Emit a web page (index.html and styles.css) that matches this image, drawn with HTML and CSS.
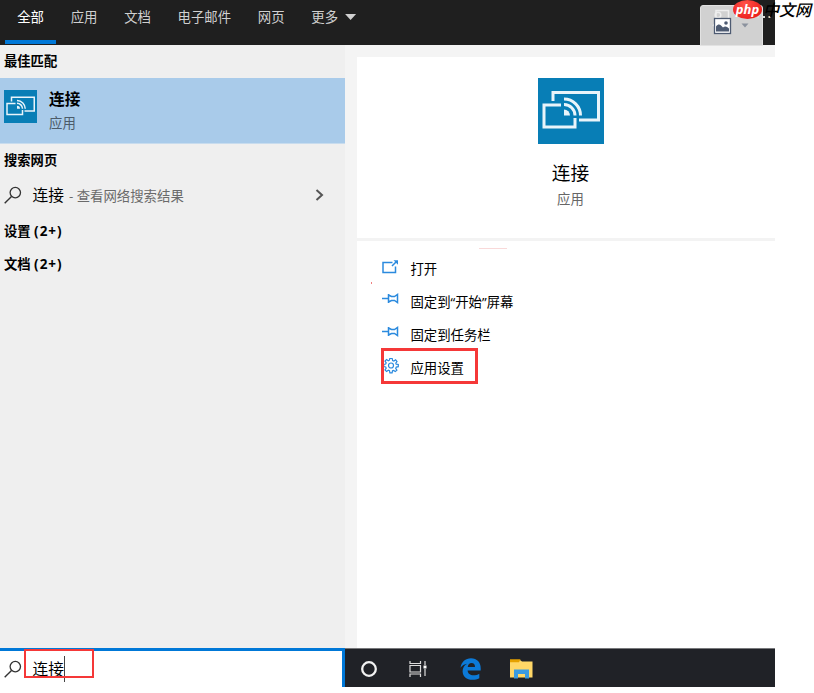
FILE: index.html
```
<!DOCTYPE html>
<html lang="zh-CN">
<head>
    <meta charset="UTF-8">
    <meta name="viewport" content="width=device-width, initial-scale=1.0">
    <title>连接 - 搜索</title>
    <link rel="stylesheet" href="styles.css">
</head>
<body>
    <svg class="symbols">
        <symbol id="icon-connect" viewBox="0 0 66 66">
            <path d="M15 23V14.5H60.500V42H41M23 27H6V49H37V40" fill="none" stroke="#e9f4fa" stroke-width="3"/>
            <path d="M26 31.5A6 6 0 0 1 32 37.500H26z" fill="#e9f4fa"/>
            <path d="M26 26.500A11 11 0 0 1 37 37.500M26 21A16.500 16.500 0 0 1 42.500 37.500" fill="none" stroke="#e9f4fa" stroke-width="3"/>
        </symbol>
        <symbol id="icon-search" viewBox="0 0 18 18">
            <circle cx="11.300" cy="6.600" r="5.200" fill="none" stroke="#333" stroke-width="1.300"/>
            <path d="M7.500 10.500L.7 17.300" stroke="#333" stroke-width="1.400"/>
        </symbol>
        <symbol id="icon-pin" viewBox="0 0 17 12">
            <path d="M0 5.500H6.500M6.500 1V10M6.500 2L9.500 3.500H12.500L15.500 1.500V9.500L12.500 7.500H9.500L6.500 9" fill="none" stroke="#2b8ade" stroke-width="1.500"/>
        </symbol>
    </svg>

    <div class="screen">
        <div class="tabs">
            <div class="tab active">全部</div>
            <div class="tab">应用</div>
            <div class="tab">文档</div>
            <div class="tab">电子邮件</div>
            <div class="tab">网页</div>
            <div class="tab">更多<span class="arrow"></span></div>
        </div>

        <div class="main">
            <div class="results">
                <h2>最佳匹配</h2>
                <div class="best">
                    <svg class="app-icon"><use href="#icon-connect"/></svg>
                    <div>
                        <p class="best-name">连接</p>
                        <p class="best-type">应用</p>
                    </div>
                </div>
                <h2>搜索网页</h2>
                <div class="web-row">
                    <svg class="search-icon"><use href="#icon-search"/></svg>
                    <span class="term">连接</span>
                    <span class="hint">- 查看网络搜索结果</span>
                    <svg class="chevron" viewBox="0 0 9 12"><path d="M1.500 1L7 6L1.500 11" fill="none" stroke="#555" stroke-width="2"/></svg>
                </div>
                <h2>设置 <span class="count">(2+)</span></h2>
                <h2>文档 <span class="count">(2+)</span></h2>
            </div>

            <div class="detail">
                <div class="hero">
                    <svg class="hero-icon"><use href="#icon-connect"/></svg>
                    <p class="hero-name">连接</p>
                    <p class="hero-type">应用</p>
                </div>
                <div class="actions">
                    <div class="action">
                        <svg viewBox="0 0 17 14"><path d="M10.500 2.500H1V12.500H13.500V6.500M10 6L14.500 1.500" fill="none" stroke="#2b8ade" stroke-width="1.500"/><path d="M11.500 .3H16V4.800z" fill="#2b8ade"/></svg>
                        <span>打开</span>
                    </div>
                    <div class="action">
                        <svg class="pin"><use href="#icon-pin"/></svg>
                        <span>固定到“开始”屏幕</span>
                    </div>
                    <div class="action">
                        <svg class="pin"><use href="#icon-pin"/></svg>
                        <span>固定到任务栏</span>
                    </div>
                    <div class="action">
                        <svg class="gear" viewBox="0 0 16 16"><path d="M6.800 1H9.200L9.600 3L10.900 3.500L12.600 2.300L14 4L12.800 5.600L13.200 6.700L15.300 7V9.200L13.300 9.600L12.700 10.900L13.900 12.600L12.300 14.100L10.600 12.900L9.500 13.300L9.100 15.300H6.900L6.500 13.300L5.300 12.800L3.600 14L2 12.400L3.200 10.700L2.700 9.500L.7 9.100V6.900L2.700 6.500L3.200 5.300L2 3.600L3.600 2L5.300 3.200L6.400 2.700z" fill="none" stroke="#2b8ade" stroke-width="1.200"/><circle cx="8" cy="8" r="2.500" fill="none" stroke="#2b8ade" stroke-width="1.200"/></svg>
                        <span>应用设置</span>
                    </div>
                </div>
            </div>
        </div>

        <div class="bottom">
            <div class="search-box">
                <svg class="search-icon"><use href="#icon-search"/></svg>
                <span class="query">连接</span>
            </div>
            <div class="taskbar">
                <svg class="cortana" viewBox="0 0 18 18"><circle cx="9" cy="9" r="6.800" fill="none" stroke="#f2f2f2" stroke-width="2.300"/></svg>
                <svg class="task-view" viewBox="0 0 18 18">
                    <path d="M1 1V3.500H11.500V1M1 17V14H11.500V17M1 5.500H11.500V12H1zM16 1V5M16 9V16" fill="none" stroke="#ddd" stroke-width="1.200"/>
                    <path d="M14.500 5.500H17.500V8.500H14.500z" fill="#fff"/>
                </svg>
                <svg class="edge" viewBox="0 0 21 22">
                    <path d="M.5 9.800C1.300 4 5.500.3 11 .3C17 .3 20.700 4.500 20.700 10.200V12.600H7.600C7.800 15.800 10.300 17.300 13.300 17.300C15.700 17.300 17.700 16.700 19.300 15.700V20.200C17.300 21.300 15 21.800 12.500 21.800C6.500 21.800 2.600 18.300 2.600 13.200C2.600 9.900 4.300 7.200 7.200 5.700C4.300 6 2.100 7.400.5 9.800zM7.700 8.900H15C15 6.400 13.800 4.900 11.500 4.900C9.500 4.900 8.100 6.400 7.700 8.900z" fill="#0c7ad8"/>
                </svg>
                <svg class="folder" viewBox="0 0 23 20">
                    <path d="M0 1H10L12 2.500H22.500V18.500H0z" fill="#ffd767"/>
                    <path d="M0 .3H10.500L9 3.300H0z" fill="#e5a100"/>
                    <path d="M4 19.500V10.500H19V19.500H15V15H8V19.500z" fill="#3a9be0"/>
                </svg>
            </div>
        </div>
    </div>

    <!-- floating image button -->
    <div class="picture-button">
        <svg viewBox="0 0 61 39">
            <path d="M15 11V4.500H27.500V12M12 20L14 17.500" fill="none" stroke="#eee" stroke-width="1.500"/>
            <circle cx="17" cy="9" r="2.800" fill="none" stroke="#eee" stroke-width="1.500"/>
            <rect x="13.500" y="12.500" width="16" height="15" fill="#fff" stroke="#4e5b72" stroke-width="1.300"/>
            <path d="M15 25.500V20.500C18 16.500 20 19.500 22 21.500C24 19.500 26 20.500 28 22.500V25.500z" fill="#4e5b72"/>
            <circle cx="25" cy="17" r="1.800" fill="#4e5b72"/>
            <path d="M40.500 17.500H47.500L44 21.500z" fill="#8b929e"/>
        </svg>
    </div>
    <svg class="dots" viewBox="0 0 16 4"><path d="M1 1H3V3H1zM7 1H9V3H7zM12.500 1H14.500V3H12.500z" fill="#ddd"/></svg>
    <div class="brand"><span class="brand-php">php</span><span class="brand-cn">中文网</span></div>

    <div class="box box-action"></div>
    <div class="box box-query"></div>
    <div class="trace trace-line"></div>
    <div class="trace trace-dot"></div>
</body>
</html>
```
FILE: styles.css
```
/* Reset margin and padding */
* {
    margin: 0;
    padding: 0;
    box-sizing: border-box;
}

body {
    font-family: "Open Sans", "Noto Sans CJK SC", sans-serif;
    font-size: 13.4px;
    line-height: 20px;
    background: #fff;
    color: #000;
    overflow: hidden;
}

svg {
    display: block;
    flex: none;
}

.symbols {
    position: absolute;
    width: 0;
    height: 0;
}

.screen {
    width: 775px;
    height: 687px;
    display: flex;
    flex-direction: column;
}

/* Top filter tabs */
.tabs {
    height: 45px;
    background: #1f1f1f;
    display: flex;
    padding-left: 5px;
    gap: 2px;
    color: #d0d0d0;
}

.tab {
    height: 44px;
    padding: 7px 12.5px 0 12.2px;
    display: flex;
    border-bottom: 4px solid transparent;
}

.tab.active {
    color: #fff;
    border-color: #0078d7;
}

.arrow {
    margin: 7px 0 0 7px;
    width: 11px;
    height: 6px;
    background: #d0d0d0;
    clip-path: polygon(0 0, 100% 0, 50% 100%);
}

.main {
    height: 603px;
    display: flex;
    background: #f4f4f4;
}

/* Left result list */
.results {
    width: 345px;
    background: #efefef;
}

.results h2 {
    height: 33px;
    padding-left: 4px;
    font-size: 13.3px;
    line-height: 33px;
    font-weight: 700;
}

.results .count {
    font-size: 13.5px;
    letter-spacing: 1px;
}

.best {
    height: 66px;
    padding: 11px 4px;
    display: flex;
    gap: 12px;
    background: #a9cbea;
    border-bottom: 1px solid #c8dcee;
}

.app-icon {
    width: 33px;
    height: 33px;
    margin-top: 1px;
    background: #087eb6;
}

.best-name {
    font-size: 15.7px;
    font-weight: 700;
}

.best-type {
    margin-top: 4px;
    color: #4c5b69;
}

.web-row {
    height: 38px;
    padding: 0 21px 2px 4px;
    display: flex;
    align-items: center;
}

.search-icon {
    width: 18px;
    height: 18px;
}

.term {
    margin-left: 10.5px;
    font-size: 15.7px;
}

.hint {
    margin-left: 5px;
    padding-top: 2px;
    color: #6a6a6a;
}

.chevron {
    width: 9px;
    height: 12px;
    margin-left: auto;
}

/* Right detail pane */
.detail {
    flex: 1;
    margin: 12px 0 0 12px;
    background: #fff;
}

.hero {
    height: 184px;
    padding: 21px 0 0 9px;
    border-bottom: 3px solid #f3f3f3;
    display: flex;
    flex-direction: column;
    align-items: center;
}

.hero-icon {
    width: 66px;
    height: 66px;
    background: #087eb6;
}

.hero-name {
    margin-top: 16px;
    font-size: 18.7px;
    line-height: 26px;
}

.hero-type {
    margin-top: 3px;
    color: #666;
}

.actions {
    padding: 11px 0 0 25px;
}

.action {
    height: 33px;
    display: flex;
    align-items: center;
    gap: 11.4px;
}

.action svg {
    width: 17px;
    height: 14px;
    margin-bottom: 4px;
}

.action .pin {
    height: 12px;
    margin-bottom: 5px;
}

.action .gear {
    width: 16px;
    height: 17px;
    margin: 0 0 4px 1px;
}

/* Search field and taskbar */
.bottom {
    height: 39px;
    display: flex;
}

.search-box {
    width: 345px;
    display: flex;
    align-items: center;
    padding-left: 4px;
    border-top: 3px solid #0078d7;
    border-right: 3px solid #0078d7;
}

.query {
    margin-left: 10.5px;
    height: 26px;
    line-height: 26px;
    font-size: 15.7px;
    border-right: 1px solid #444;
}

.taskbar {
    flex: 1;
    display: flex;
    align-items: center;
    padding: 2px 0 0 15px;
    background: #202227;
    border-top: 1px solid #77787b;
}

.cortana {
    width: 18px;
    height: 18px;
}

.task-view {
    width: 18px;
    height: 18px;
    margin-left: 31px;
}

.edge {
    width: 21px;
    height: 22px;
    margin-left: 33px;
}

.folder {
    width: 23px;
    height: 20px;
    margin: 0 0 1px 29px;
}

/* Items lying over the screen */
.picture-button {
    position: absolute;
    left: 700px;
    top: 5px;
    width: 63px;
    height: 41px;
    background: #d1d1d1;
    border: 1px solid #e2e2e2;
    border-radius: 3px 3px 0 0;
}

.picture-button svg {
    width: 61px;
    height: 39px;
}

.dots {
    position: absolute;
    left: 756px;
    top: 15px;
    width: 16px;
    height: 4px;
}

.brand {
    position: absolute;
    left: 733px;
    top: 0;
    display: flex;
    font-style: italic;
    white-space: nowrap;
}

.brand-php {
    width: 29px;
    height: 19px;
    border-radius: 50%;
    background: radial-gradient(ellipse at 40% 20%, #ff5147, #e60f0f);
    color: #fff;
    font-family: "Open Sans", sans-serif;
    font-size: 13px;
    font-weight: 700;
    line-height: 18px;
    text-align: center;
}

.brand-cn {
    margin-left: 1px;
    font-size: 16px;
    line-height: 20px;
    font-weight: 500;
}

.box {
    position: absolute;
    border: 3px solid #f53838;
}

.box-action {
    left: 381px;
    top: 348px;
    width: 97px;
    height: 36px;
}

.box-query {
    left: 24px;
    top: 649px;
    width: 70px;
    height: 29px;
    border-width: 2px;
}

.trace {
    position: absolute;
    background: #f9d9d9;
}

.trace-line {
    left: 479px;
    top: 248px;
    width: 28px;
    height: 1px;
}

.trace-dot {
    left: 371px;
    top: 282px;
    width: 1px;
    height: 2px;
    background: #f08080;
}
```
